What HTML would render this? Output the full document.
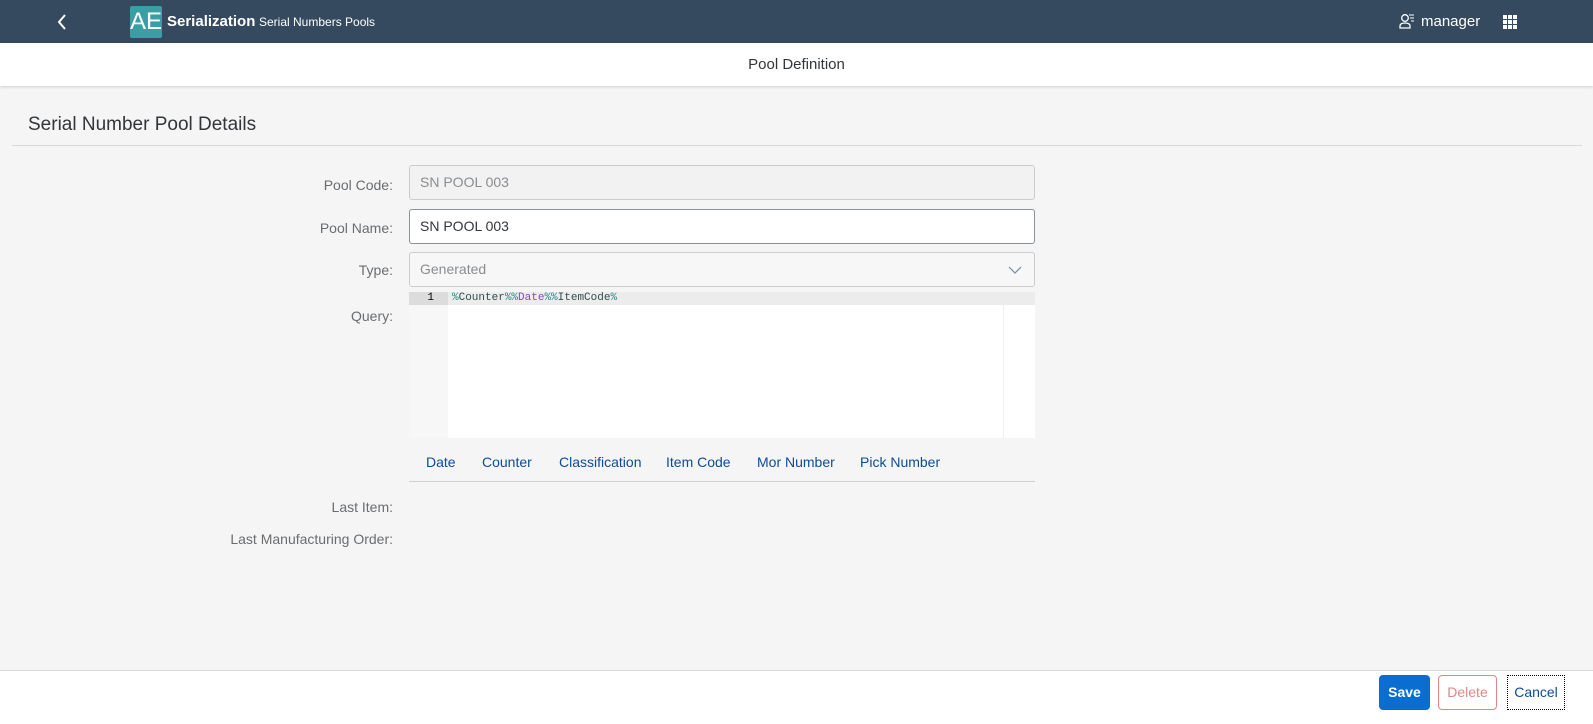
<!DOCTYPE html>
<html><head><style>
*{box-sizing:border-box;margin:0;padding:0}
body{width:1593px;height:724px;overflow:hidden;background:#f5f5f5;font-family:"Liberation Sans",sans-serif;position:relative}
.top{position:absolute;left:0;top:0;width:1593px;height:43px;background:#354a5f;color:#fff}
.sub{position:absolute;left:0;top:43px;width:1593px;height:43px;background:#fff;box-shadow:0 1px 3px rgba(0,0,0,.15);text-align:center;line-height:44px;font-size:15px;color:#32363a}
.lbl{position:absolute;right:1200px;font-size:14px;color:#6a6d70;text-align:right}
.inp{position:absolute;left:409px;width:626px;height:35px;border:1px solid #bfbfbf;border-radius:3px;padding-left:10px;line-height:33px;font-size:14px}
.tab{position:absolute;top:454px;font-size:14px;color:#0a4c9a}
.foot{position:absolute;left:0;top:670px;width:1593px;height:54px;background:#fff;border-top:1px solid #d9d9d9}
</style></head><body>
<div class="top">
<svg style="position:absolute;left:56px;top:14px" width="12" height="16"><path d="M9 1L3 8l6 7" stroke="#fff" stroke-width="2" fill="none"/></svg>
<div style="position:absolute;left:130px;top:6px;width:32px;height:32px;background:#3a9ea5;border-radius:2px;font-size:24px;line-height:32px;text-align:center;color:#fff">AE</div>
<div style="position:absolute;left:167px;top:13px;font-size:15px;font-weight:bold">Serialization</div>
<div style="position:absolute;left:259px;top:15px;font-size:12px">Serial Numbers Pools</div>
<svg style="position:absolute;left:1399px;top:13px" width="16" height="16"><circle cx="6" cy="5" r="3.3" stroke="#fff" fill="none" stroke-width="1.3"/><path d="M1 15v-2q0-3 5-3t5 3v2z" stroke="#fff" fill="none" stroke-width="1.3"/><path d="M10 2h5M11 5h4M12 8h3" stroke="#fff" stroke-width="1"/></svg>
<div style="position:absolute;left:1421px;top:13px;font-size:15px">manager</div>
<svg style="position:absolute;left:1503px;top:15px" width="14" height="14" fill="#fff"><rect x="0" y="0" width="4" height="4"/><rect x="5" y="0" width="4" height="4"/><rect x="10" y="0" width="4" height="4"/><rect x="0" y="5" width="4" height="4"/><rect x="5" y="5" width="4" height="4"/><rect x="10" y="5" width="4" height="4"/><rect x="0" y="10" width="4" height="4"/><rect x="5" y="10" width="4" height="4"/><rect x="10" y="10" width="4" height="4"/></svg>
</div>
<div class="sub">Pool Definition</div>
<div style="position:absolute;left:28px;top:114px;font-size:19px;color:#32363a">Serial Number Pool Details</div>
<div style="position:absolute;left:12px;top:145px;width:1570px;height:1px;background:#d9d9d9"></div>
<div class="lbl" style="top:177px">Pool Code:</div>
<div class="lbl" style="top:220px">Pool Name:</div>
<div class="lbl" style="top:262px">Type:</div>
<div class="lbl" style="top:308px">Query:</div>
<div class="lbl" style="top:499px">Last Item:</div>
<div class="lbl" style="top:531px">Last Manufacturing Order:</div>
<div class="inp" style="top:165px;background:#f2f2f2;color:#8a8d90;border-color:#ccc">SN POOL 003</div>
<div class="inp" style="top:209px;background:#fff;color:#32363a;border-color:#89919a">SN POOL 003</div>
<div class="inp" style="top:252px;background:#f7f7f7;color:#8a8d90;border-color:#ccc">Generated
<svg style="position:absolute;right:12px;top:13px" width="14" height="9"><path d="M1 1l6 6 6-6" stroke="#6a8fb5" fill="none" stroke-width="1.2"/></svg></div>
<div style="position:absolute;left:409px;top:292px;width:626px;height:146px;background:#fff"></div>
<div style="position:absolute;left:409px;top:292px;width:39px;height:146px;background:#f7f7f7"></div>
<div style="position:absolute;left:409px;top:292px;width:626px;height:13px;background:#ececec"></div>
<div style="position:absolute;left:409px;top:292px;width:39px;height:13px;background:#dcdcdc;font:11px 'Liberation Mono',monospace;text-align:right;padding-right:14px;line-height:13px">1</div>
<div style="position:absolute;left:1003px;top:305px;width:1px;height:133px;background:#eee"></div>
<div style="position:absolute;left:452px;top:292px;font:11px 'Liberation Mono',monospace;line-height:13px;color:#2f4f4f"><span style="color:#2b8a8a">%</span>Counter<span style="color:#2b8a8a">%%</span><span style="color:#8a4baf">Date</span><span style="color:#2b8a8a">%%</span>ItemCode<span style="color:#2b8a8a">%</span></div>
<div class="tab" style="left:426px">Date</div>
<div class="tab" style="left:482px">Counter</div>
<div class="tab" style="left:559px">Classification</div>
<div class="tab" style="left:666px">Item Code</div>
<div class="tab" style="left:757px">Mor Number</div>
<div class="tab" style="left:860px">Pick Number</div>
<div style="position:absolute;left:409px;top:481px;width:626px;height:1px;background:#d0d0d0"></div>
<div class="foot"></div>
<div style="position:absolute;left:1379px;top:675px;width:51px;height:35px;background:#0a6ed1;border-radius:4px;color:#fff;font-weight:bold;font-size:14px;text-align:center;line-height:35px">Save</div>
<div style="position:absolute;left:1438px;top:675px;width:59px;height:35px;border:1px solid #e08686;border-radius:4px;color:#e08686;font-size:14px;text-align:center;line-height:33px;background:#fff">Delete</div>
<div style="position:absolute;left:1507px;top:675px;width:58px;height:35px;border:1px dotted #000;color:#0a4c9a;font-size:14px;text-align:center;line-height:33px">Cancel</div>
</body></html>
